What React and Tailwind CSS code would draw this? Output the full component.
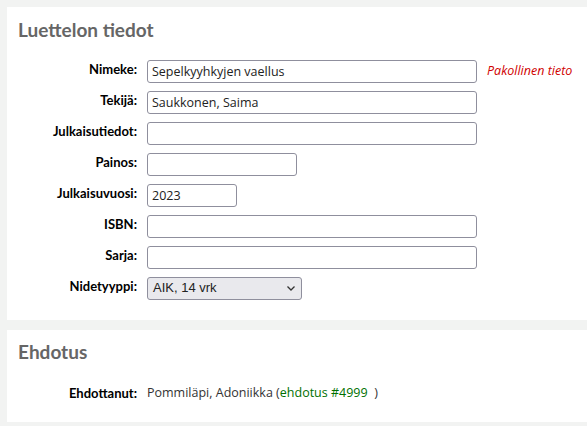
import { useState } from "react";

const fields = [
    { label: "Nimeke:", value: "Sepelkyyhkyjen vaellus", width: "w-[330px]", required: true },
    { label: "Tekijä:", value: "Saukkonen, Saima", width: "w-[330px]" },
    { label: "Julkaisutiedot:", value: "", width: "w-[330px]" },
    { label: "Painos:", value: "", width: "w-[150px]" },
    { label: "Julkaisuvuosi:", value: "2023", width: "w-[90px]" },
    { label: "ISBN:", value: "", width: "w-[330px]" },
    { label: "Sarja:", value: "", width: "w-[330px]" },
];

const Row = ({ label, children }) => (
    <div className="flex items-center h-[31px]">
        <label className="w-[140px] text-right pr-[10px] font-bold text-[13px] text-black font-['Lato',sans-serif] -mt-[2px]">
            {label}
        </label>
        {children}
    </div>
);

const App = () => {
    const [form, setForm] = useState(
        Object.fromEntries(fields.map((f) => [f.label, f.value]))
    );

    return (
        <div className="min-h-screen bg-[#f2f3f2] pt-[7px] pl-[7px] pb-[4px] font-['Open_Sans',sans-serif]">
            <section className="bg-white h-[313px] pt-[9px]">
                <h2 className="pl-[11px] text-[19px] font-bold text-[#666] font-['Lato',sans-serif]">
                    Luettelon tiedot
                </h2>

                <div className="mt-[11px]">
                    {fields.map((f) => (
                        <Row key={f.label} label={f.label}>
                            <input
                                type="text"
                                value={form[f.label]}
                                onChange={(e) => setForm({ ...form, [f.label]: e.target.value })}
                                className={`${f.width} h-[23px] border border-[#8f8f9d] rounded-[3px] px-[4px] text-[12.5px] text-[#222] bg-white outline-none`}
                            />
                            {f.required && (
                                <span className="ml-[10px] text-[12.5px] italic text-[#d00000]">
                                    Pakollinen tieto
                                </span>
                            )}
                        </Row>
                    ))}

                    <Row label="Nidetyyppi:">
                        <div className="relative w-[155px] h-[23px] border border-[#8f8f9d] rounded-[3px] bg-[#e9e9ed] flex items-center px-[5px] text-[13px] text-[#222] font-['Liberation_Sans',sans-serif]">
                            AIK, 14 vrk
                            <svg
                                className="absolute right-[5px] top-[7px]"
                                width="10"
                                height="7"
                                viewBox="0 0 10 7"
                                fill="none"
                                stroke="#333"
                                strokeWidth="1.3"
                            >
                                <path d="M1.5 1.5 L5 5 L8.5 1.5" />
                            </svg>
                        </div>
                    </Row>
                </div>
            </section>

            <section className="bg-white mt-[10px] h-[92px] pt-[8px]">
                <h2 className="pl-[11px] text-[19px] font-bold text-[#666] font-['Lato',sans-serif]">
                    Ehdotus
                </h2>
                <div className="flex items-center mt-[17px]">
                    <span className="w-[140px] text-right pr-[10px] font-bold text-[13px] text-black font-['Lato',sans-serif]">
                        Ehdottanut:
                    </span>
                    <span className="text-[12.5px] text-[#333]">
                        Pommiläpi, Adoniikka (
                        <a href="#" className="text-[#007000]">ehdotus #4999</a>
                        &nbsp;&nbsp;)
                    </span>
                </div>
            </section>
        </div>
    );
};

export default App;
